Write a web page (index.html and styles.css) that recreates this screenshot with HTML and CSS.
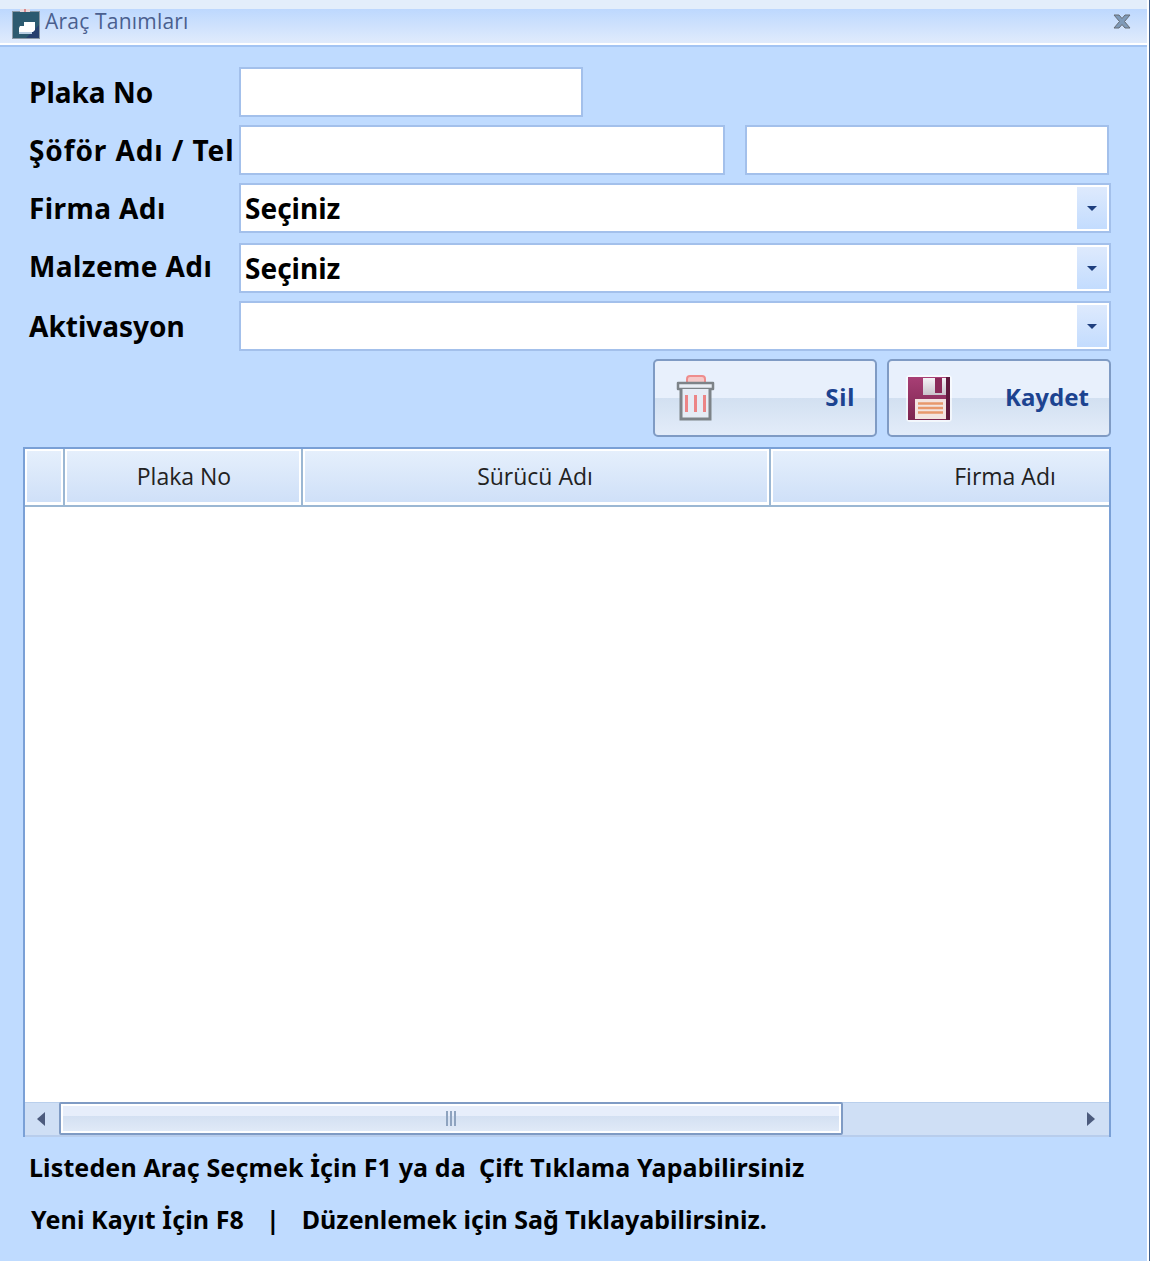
FILE: index.html
```html
<!DOCTYPE html>
<html lang="tr">
<head>
<meta charset="UTF-8">
<meta name="viewport" content="width=device-width, initial-scale=1.0">
<title>Araç Tanımları</title>
<link rel="stylesheet" href="styles.css">
</head>
<body>

<div class="window">
  <div class="titlebar">
    <svg class="title-icon" width="28" height="30" viewBox="0 0 28 30">
      <rect x="0.5" y="2.5" width="27" height="27" fill="#2c5a70" stroke="#8a98a6"/>
      <rect x="8" y="0" width="10" height="3" fill="#e8d8dc"/>
      <rect x="12" y="0" width="2" height="3" fill="#d88a90"/>
      <path d="M14 29 L27 29 L27 16 Z" fill="#26406f"/>
      <path d="M8 17 L12 17 L12 13 L23 13 L23 21 L21 23 L7 23 L7 19 Z" fill="#fff"/>
      <path d="M7 23 L20 23 L20 25 L7 25 Z" fill="#b9cfe4"/>
    </svg>
    <span class="title-text">Araç Tanımları</span>
    <svg class="title-close" width="18" height="18" viewBox="0 0 18 18">
      <path d="M1 2 L6 2 L9 5.5 L12 2 L17 2 L11.5 8.5 L17 15 L12 15 L9 11.5 L6 15 L1 15 L6.5 8.5 Z" fill="#7f9ab8" stroke="#666c74" stroke-width="1"/>
    </svg>
  </div>

  <div class="content">
    <div class="form-row">
      <label class="form-label">Plaka No</label>
      <div class="input plate"></div>
    </div>
    <div class="form-row">
      <label class="form-label driver-label">Şöför Adı / Tel</label>
      <div class="input driver"></div>
      <div class="input phone"></div>
    </div>
    <div class="form-row">
      <label class="form-label label-wide">Firma Adı</label>
      <div class="input combo"><span>Seçiniz</span><div class="combo-btn"><i></i></div></div>
    </div>
    <div class="form-row wide-gap">
      <label class="form-label label-wide label-up">Malzeme Adı</label>
      <div class="input combo"><span>Seçiniz</span><div class="combo-btn"><i></i></div></div>
    </div>
    <div class="form-row">
      <label class="form-label">Aktivasyon</label>
      <div class="input combo"><span></span><div class="combo-btn"><i></i></div></div>
    </div>

    <div class="actions">
      <button class="action-btn">
        <svg class="trash-icon" width="42" height="48" viewBox="0 0 42 48">
          <path d="M12 8 L12 5 Q12 2 15 2 L27 2 Q30 2 30 5 L30 8" fill="#f5c9c9" stroke="#ee8d8d" stroke-width="2"/>
          <path d="M3 9 L38 9 L38 15 L3 15 Z" fill="#e9eef5" stroke="#7d8388" stroke-width="2.5" stroke-linejoin="round"/>
          <path d="M6 15 L6 45 L35 45 L35 15" fill="#e6ecf5" stroke="#7d8388" stroke-width="3"/>
          <path d="M11.5 21 V38 M20.5 21 V38 M29.5 21 V38" stroke="#ec8586" stroke-width="3" fill="none"/>
        </svg>
        <span class="delete-text">Sil</span>
      </button>
      <button class="action-btn">
        <svg width="46" height="47" viewBox="0 0 46 47">
          <defs>
            <linearGradient id="disk" x1="0" y1="0" x2="0" y2="1">
              <stop offset="0" stop-color="#a83f75"/>
              <stop offset="1" stop-color="#7c2550"/>
            </linearGradient>
            <linearGradient id="shutter" x1="0" y1="0" x2="0" y2="1">
              <stop offset="0" stop-color="#f4f3f6"/>
              <stop offset="1" stop-color="#c9c3cb"/>
            </linearGradient>
          </defs>
          <rect x="0" y="0" width="46" height="47" rx="4" fill="#fff" fill-opacity="0.65"/>
          <rect x="2" y="2" width="42" height="43" fill="url(#disk)"/>
          <rect x="40" y="2" width="4" height="43" fill="#5f1a3d"/>
          <rect x="17" y="3" width="23" height="17" fill="url(#shutter)"/>
          <rect x="29" y="3" width="7" height="15" fill="#8a2a58"/>
          <rect x="9" y="24" width="31" height="20" fill="#f3e4e0"/>
          <path d="M12 28.5 H37 M12 33 H37 M12 37.5 H37" stroke="#e8986c" stroke-width="2.5"/>
        </svg>
        <span>Kaydet</span>
      </button>
    </div>

    <div class="table">
      <div class="table-head">
        <div class="th selector"></div>
        <div class="th col-plate">Plaka No</div>
        <div class="th col-driver">Sürücü Adı</div>
        <div class="th col-firm">Firma Adı</div>
      </div>
      <div class="table-body"></div>
      <div class="hscroll">
        <div class="scroll-arrow left"><i></i></div>
        <div class="scroll-thumb"><b></b></div>
        <div class="scroll-track"></div>
        <div class="scroll-arrow right"><i></i></div>
      </div>
    </div>

    <p class="hint first">Listeden Araç Seçmek İçin F1 ya da&nbsp; Çift Tıklama Yapabilirsiniz</p>
    <p class="hint second">Yeni Kayıt İçin F8 &nbsp;<span class="sep">|</span>&nbsp; &nbsp;<span class="hint-end">Düzenlemek için Sağ Tıklayabilirsiniz.</span></p>
  </div>
</div>

</body>
</html>
```

FILE: styles.css
```css
html, body {
  margin: 0;
  height: 100%;
  overflow: hidden;
}
body {
  font-family: "DejaVu Sans", sans-serif;
  background-color: #bfdbff;
}
.window {
  height: 1261px;
  box-sizing: border-box;
  border-right: 1px solid #3f5f8c;
  box-shadow: inset -2px 0 0 #fff;
  background-color: #bfdbff;
  display: flex;
  flex-direction: column;
}
.titlebar {
  height: 34px;
  border-top: 9px solid #e3eefb;
  border-bottom: 2px solid #fff;
  box-shadow: 0 2px 0 #a3c4f3;
  background: linear-gradient(#bdd8fe, #e0ebfc);
  display: flex;
  align-items: center;
  padding: 0 16px 0 12px;
  margin-right: 2px;
}
.title-icon {
  margin-top: -4px;
  flex: none;
}
.title-text {
  margin-left: 5px;
  margin-top: -10px;
  font-family: "Open Sans", sans-serif;
  font-size: 21px;
  letter-spacing: 0.2px;
  color: #4a5f8f;
}
.title-close {
  margin-left: auto;
  margin-top: -8px;
}
.content {
  padding: 22px 38px 0 23px;
  display: flex;
  flex-direction: column;
}
.form-row {
  display: flex;
  align-items: center;
  height: 50px;
  margin-bottom: 8px;
}
.form-row.wide-gap {
  margin-top: 2px;
}
.form-label {
  width: 216px;
  padding: 0 0 1px 6px;
  box-sizing: border-box;
  flex: none;
  font-family: "Noto Sans", sans-serif;
  font-weight: bold;
  font-size: 28px;
  white-space: nowrap;
  color: #000;
}
.driver-label {
  letter-spacing: 0.9px;
}
.label-wide {
  letter-spacing: 0.4px;
}
.label-up {
  padding-bottom: 5px;
}
.input {
  height: 50px;
  box-sizing: border-box;
  background-color: #fff;
  border: 2px solid #a3c0eb;
}
.plate { width: 344px; }
.driver { width: 486px; }
.phone { width: 364px; margin-left: 20px; }
.combo {
  flex: 1;
  display: flex;
  align-items: center;
  padding: 0 2px 0 4px;
  font-family: "Noto Sans", sans-serif;
  font-weight: bold;
  font-size: 28px;
}
.combo span {
  flex: 1;
  padding-bottom: 1px;
}
.combo-btn {
  width: 30px;
  height: 42px;
  background: linear-gradient(#deeafd, #c3dcfe);
  display: flex;
  align-items: center;
  justify-content: center;
}
.combo-btn i {
  width: 0;
  height: 0;
  border-left: 5px solid transparent;
  border-right: 5px solid transparent;
  border-top: 5px solid #1f3f7e;
}
.actions {
  display: flex;
  justify-content: flex-end;
  gap: 10px;
}
.action-btn {
  width: 224px;
  height: 78px;
  box-sizing: border-box;
  border: 2px solid #7f9bc4;
  border-radius: 5px;
  background: linear-gradient(#e8f0fc 0 50%, #d2e0f1 50%, #e3ecf9 100%);
  padding: 0 20px 0 17px;
  display: flex;
  align-items: center;
  justify-content: space-between;
  font-family: "Noto Sans", sans-serif;
  font-weight: bold;
  font-size: 24px;
  color: #1c4390;
}
.action-btn span {
  padding-bottom: 4px;
}
.delete-text {
  letter-spacing: 0.7px;
}
.trash-icon {
  margin-left: 3px;
}
.table {
  margin-top: 10px;
  height: 690px;
  box-sizing: border-box;
  border: 2px solid #7aa0d6;
  border-bottom: none;
  display: flex;
  flex-direction: column;
}
.table-head {
  display: flex;
  height: 58px;
  flex: none;
  background-color: #9bb7d3;
  border-bottom: 2px solid #9bb7d3;
  box-sizing: border-box;
  gap: 2px;
}
.th {
  box-sizing: border-box;
  border: 2px solid #fff;
  border-bottom-width: 3px;
  padding-bottom: 2px;
  background: linear-gradient(#e5effc, #cfe0f8);
  display: flex;
  align-items: center;
  justify-content: center;
  font-family: "Open Sans", sans-serif;
  font-size: 23px;
  color: #222;
}
.selector { width: 38px; }
.col-plate { width: 236px; padding-left: 2px; }
.col-driver { width: 466px; padding-right: 2px; }
.col-firm { flex: 1; padding-left: 128px; border-right: none; }
.table-body {
  flex: 1;
  background-color: #fff;
}
.hscroll {
  height: 35px;
  flex: none;
  display: flex;
  background-color: #cfdff5;
  border-top: 1px solid #b9cfec;
  border-bottom: 2px solid #b8cdec;
  box-sizing: border-box;
}
.scroll-arrow {
  width: 34px;
  flex: none;
  box-sizing: border-box;
  display: flex;
  align-items: center;
  justify-content: center;
}
.scroll-arrow.left { padding-right: 3px; }
.scroll-arrow.right { padding-right: 2px; }
.scroll-arrow i {
  width: 0;
  height: 0;
  border-top: 7px solid transparent;
  border-bottom: 7px solid transparent;
}
.scroll-arrow.left i { border-right: 8px solid #4c5b7d; }
.scroll-arrow.right i { border-left: 8px solid #4c5b7d; }
.scroll-thumb {
  width: 784px;
  flex: none;
  box-sizing: border-box;
  margin-top: -1px;
  border: 2px solid #7f9bc4;
  border-radius: 2px;
  box-shadow: inset 0 0 0 2px #fff;
  background: linear-gradient(#e7eefb 0 40%, #d3e0f2 40%, #e2ebf8 100%);
  display: flex;
  align-items: center;
  justify-content: center;
}
.scroll-thumb b {
  width: 2px;
  height: 15px;
  background-color: #8ea3bf;
  box-shadow: 4px 0 0 #8ea3bf, -4px 0 0 #8ea3bf;
}
.scroll-track { flex: 1; }
.hint {
  margin: 0;
  font-family: "Noto Sans", sans-serif;
  font-weight: bold;
  font-size: 25px;
  letter-spacing: 0.13px;
  line-height: 32px;
  white-space: pre;
  color: #000;
}
.hint.first {
  margin-top: 14px;
  padding-left: 6px;
}
.hint.second {
  margin-top: 20px;
  padding-left: 8px;
  letter-spacing: 0.1px;
}
.sep {
  margin: 0 2px 0 9px;
}
.hint-end {
  letter-spacing: 0;
}
```
